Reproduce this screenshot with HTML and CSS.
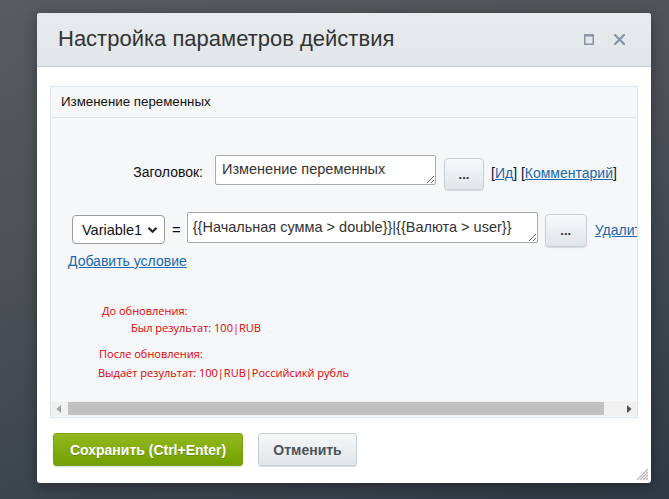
FILE: index.html
```html
<!DOCTYPE html>
<html lang="ru">
<head>
<meta charset="utf-8">
<title>Настройка параметров действия</title>
<link rel="stylesheet" href="styles.css">
</head>
<body>
<div class="dialog">
  <div class="titlebar">
    <div class="title">Настройка параметров действия</div>
    <div class="title-icons">
      <svg class="ico-max" width="10" height="11" viewBox="0 0 10 11"><rect x="0.75" y="1" width="8.5" height="9.25" fill="none" stroke="#8693a0" stroke-width="1.5"/><rect x="0" y="0.5" width="10" height="2" fill="#8693a0"/></svg>
      <svg class="ico-close" width="11" height="11" viewBox="0 0 11 11"><path d="M1 1 L10 10 M10 1 L1 10" stroke="#8693a0" stroke-width="2.2" stroke-linecap="square"/></svg>
    </div>
  </div>
  <div class="content">
    <div class="panel">
      <div class="panel-head">Изменение переменных</div>
      <div class="panel-body">
        <div class="scroll-area">
          <div class="row row-title">
            <div class="label">Заголовок:</div>
            <textarea class="field field-title">Изменение переменных</textarea>
            <button class="dots dots-1">...</button>
            <div class="links">[<a href="#">Ид</a>] [<a href="#">Комментарий</a>]</div>
          </div>
          <div class="row row-cond">
            <div class="select"><span>Variable1</span><svg width="11" height="8" viewBox="0 0 11 8"><path d="M1.5 1.8 L5.5 5.8 L9.5 1.8" fill="none" stroke="#222" stroke-width="2.2"/></svg></div>
            <div class="eq">=</div>
            <textarea class="field field-expr">{{Начальная сумма &gt; double}}|{{Валюта &gt; user}}</textarea>
            <button class="dots dots-2">...</button>
            <a class="del" href="#">Удалить</a>
          </div>
          <a class="add" href="#">Добавить условие</a>
          <div class="note">
            <div class="n1">До обновления:</div>
            <div class="n2">Был результат: 100|RUB</div>
            <div class="n3">После обновления:</div>
            <div class="n4">Выдаёт результат: 100|RUB|Российсикй рубль</div>
          </div>
        </div>
        <div class="hscroll">
          <svg class="arr arr-l" width="6" height="8" viewBox="0 0 6 8"><path d="M5 0 L0.5 4 L5 8 Z" fill="#a3a3a3"/></svg>
          <div class="thumb"></div>
          <svg class="arr arr-r" width="6" height="8" viewBox="0 0 6 8"><path d="M1 0 L5.5 4 L1 8 Z" fill="#505050"/></svg>
        </div>
      </div>
    </div>
  </div>
  <div class="footer">
    <button class="btn btn-save">Сохранить (Ctrl+Enter)</button>
    <button class="btn btn-cancel">Отменить</button>
  </div>
  <svg class="grip" width="13" height="13" viewBox="0 0 13 13"><path d="M12 1 L1 12 M12 4 L4 12 M12 7 L7 12 M12 10 L10 12" stroke="#b8b8b8" stroke-width="1.2"/></svg>
</div>
</body>
</html>
```
FILE: styles.css
```css
html, body {
  margin: 0;
  height: 499px;
  overflow: hidden;
}
body {
  background: linear-gradient(165deg, #585c61 0%, #4a4f56 45%, #2f3a45 100%);
  font-family: "Liberation Sans", Arial, sans-serif;
  padding: 13px 0 0 37px;
  box-sizing: border-box;
}
.dialog {
  position: relative;
  width: 614px;
  height: 470px;
  background: #fff;
  border-radius: 3px;
  box-shadow: 0 3px 14px rgba(0,0,0,0.35);
  display: flex;
  flex-direction: column;
  overflow: hidden;
}
.titlebar {
  height: 54px;
  box-sizing: border-box;
  background: linear-gradient(#e7ebee, #e1e6ea);
  border-bottom: 1px solid #c3cad0;
  display: flex;
  align-items: center;
  padding: 0 26px 2px 21px;
}
.title {
  flex: 1;
  font-size: 22px;
  color: #333;
}
.title-icons {
  display: flex;
  align-items: center;
  gap: 20px;
  padding-top: 2px;
}
.content {
  padding: 19px 13px 0 13px;
}
.panel {
  border: 1px solid #dbe5ea;
  background: #f5f7f8;
}
.panel-head {
  height: 31px;
  box-sizing: border-box;
  border-bottom: 1px solid #dbe5ea;
  padding: 7px 0 0 10px;
  font-size: 13.3px;
  color: #111;
}
.panel-body {
  height: 299px;
  display: flex;
  flex-direction: column;
}
.scroll-area {
  flex: 1;
  overflow: hidden;
  padding-top: 37px;
  min-height: 0;
}
.row {
  display: flex;
  align-items: flex-start;
  white-space: nowrap;
}
.label {
  width: 152px;
  flex: none;
  text-align: right;
  font-size: 14px;
  color: #111;
  line-height: 16px;
  margin-top: 9px;
  margin-right: 12px;
}
.field {
  flex: none;
  box-sizing: border-box;
  border: 1px solid #a9a9a9;
  border-radius: 2px;
  background: #fff;
  font-family: "Liberation Sans", Arial, sans-serif;
  font-size: 14.5px;
  line-height: 16px;
  color: #333;
  resize: both;
  overflow: hidden;
  margin: 0;
}
.field-title {
  width: 221px;
  height: 30px;
  padding: 5px 6px;
}
.dots {
  flex: none;
  box-sizing: border-box;
  border: 1px solid #c9d0d5;
  border-radius: 4px;
  background: linear-gradient(#f7f9fa, #dfe5e8);
  box-shadow: 0 1px 1px rgba(0,0,0,0.12);
  font-family: "Liberation Sans", Arial, sans-serif;
  font-weight: bold;
  font-size: 13px;
  color: #333;
  padding: 0;
  line-height: 1;
}
.dots-1 {
  width: 40px;
  height: 32px;
  margin: 3px 0 0 8px;
}
.links {
  font-size: 14px;
  line-height: 16px;
  color: #111;
  margin: 10px 0 0 7px;
}
a {
  color: #2067b0;
  text-decoration: underline;
}
.row-cond {
  margin-top: 22px;
  padding-left: 21px;
}
.select {
  flex: none;
  box-sizing: border-box;
  width: 93px;
  height: 29px;
  margin-top: 3px;
  border: 1px solid #9a9a9a;
  border-radius: 4px;
  background: #fff;
  display: flex;
  align-items: center;
  justify-content: space-between;
  padding: 0 6px 0 9px;
  font-size: 14.5px;
  color: #111;
}
.eq {
  font-size: 15px;
  color: #111;
  line-height: 16px;
  margin: 10px 6px 0 7px;
}
.field-expr {
  width: 351px;
  height: 31px;
  padding: 6px 5px;
}
.dots-2 {
  width: 42px;
  height: 33px;
  margin: 2px 0 0 7px;
}
.del {
  font-size: 14px;
  line-height: 16px;
  margin: 10px 0 0 8px;
}
.add {
  display: inline-block;
  font-size: 14px;
  line-height: 16px;
  margin: 6px 0 0 17px;
}
.note {
  margin-top: 33px;
  font-family: "Open Sans", "Noto Sans", sans-serif;
  font-size: 11px;
  line-height: 16px;
  color: #e00000;
}
.n1 { padding-left: 51px; }
.n2 { padding-left: 80px; margin-top: 1px; }
.n3 { padding-left: 48px; margin-top: 10px; }
.n4 { padding-left: 47px; margin-top: 3px; }
.hscroll {
  flex: none;
  height: 15px;
  background: #f1f1f1;
  display: flex;
  align-items: center;
  padding: 0 5px 0 5px;
  margin-bottom: 1px;
}
.arr-l { margin-right: 6px; }
.arr-r { margin-left: 22px; }
.thumb {
  flex: 1;
  height: 13px;
  background: #c1c1c1;
}
.footer {
  display: flex;
  gap: 15px;
  padding: 15px 0 0 16px;
}
.btn {
  height: 33px;
  box-sizing: border-box;
  border-radius: 3px;
  font-family: "Liberation Sans", Arial, sans-serif;
  font-weight: bold;
  font-size: 14px;
  padding: 0;
}
.btn-save {
  width: 190px;
  border: 1px solid #7c9f0a;
  background: linear-gradient(#94b91c, #71a000);
  color: #fff;
  text-shadow: 0 1px 0 rgba(0,0,0,0.2);
  box-shadow: 0 1px 1px rgba(0,0,0,0.15);
}
.btn-cancel {
  width: 99px;
  border: 1px solid #c9d0d5;
  background: linear-gradient(#f5f7f8, #e0e6e9);
  color: #4d535a;
  box-shadow: 0 1px 1px rgba(0,0,0,0.15);
}
.grip {
  position: absolute;
  right: 2px;
  bottom: 2px;
}
```
